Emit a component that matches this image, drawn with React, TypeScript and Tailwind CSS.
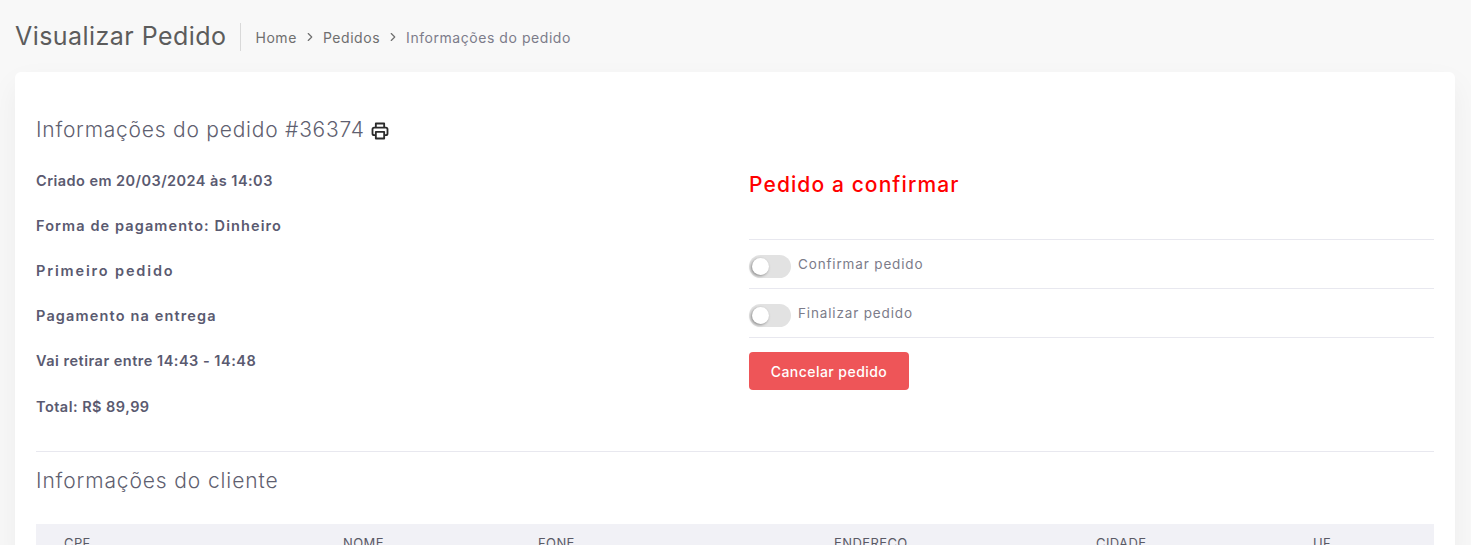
import React from 'react'
import { ChevronRight } from 'lucide-react'

// Tracking varies per row: Inter stands in for the wider original face
const infoRows = [
  { text: 'Criado em 20/03/2024 às 14:03', tracking: 'tracking-[0.45px]' },
  { text: 'Forma de pagamento: Dinheiro', tracking: 'tracking-[1.1px]' },
  { text: 'Primeiro pedido', tracking: 'tracking-[1.85px]' },
  { text: 'Pagamento na entrega', tracking: 'tracking-[1.15px]' },
  { text: 'Vai retirar entre 14:43 - 14:48', tracking: 'tracking-[0.5px]' },
  { text: 'Total: R$ 89,99', tracking: 'tracking-[0.47px]' },
]

const columns = [
  { label: 'CPF', width: 'w-[279px]' },
  { label: 'NOME', width: 'w-[195px]' },
  { label: 'FONE', width: 'w-[296px]' },
  { label: 'ENDEREÇO', width: 'w-[262px]' },
  { label: 'CIDADE', width: 'w-[217px]' },
  { label: 'UF', width: 'w-[121px]' },
]

const Toggle = ({ label }: { label: string }) => (
  <div className="flex h-[49px] items-center border-b border-[#e8e8ef]">
    <div className="relative mt-[4px] h-[23px] w-[42px] rounded-full bg-[#e2e2e2]">
      <div className="absolute left-[3px] top-[3px] h-[17px] w-[17px] rounded-full bg-white shadow-[-1px_1px_3px_rgba(0,0,0,0.4)]" />
    </div>
    <span className="ml-[7px] mt-[1px] text-[13.5px] tracking-[0.85px] text-[#7c7c8a]">{label}</span>
  </div>
)

const PrinterIcon = () => (
  <svg className="ml-[5px] mt-[2px] h-[20px] w-[20px] text-[#2b2b2b]" fill="none" stroke="currentColor" viewBox="0 0 24 24" strokeWidth={2.2} strokeLinejoin="round">
    <path d="M7 8V3h10v5" />
    <path d="M7 17H5a2 2 0 0 1-2-2v-5a2 2 0 0 1 2-2h14a2 2 0 0 1 2 2v5a2 2 0 0 1-2 2h-2" />
    <path d="M7 13h10v8H7z" />
  </svg>
)

const App = () => {
  return (
    <div className="h-screen overflow-hidden bg-[#f8f8f8] pl-[15px] pr-[16px] font-['Inter',sans-serif]">
      {/* Header */}
      <div className="flex h-[72px] items-center pt-[2px]">
        <h1 className="text-[25px] tracking-[0.45px] text-[#5c5c5c]">Visualizar Pedido</h1>
        <div className="ml-[14px] h-[28px] w-px bg-[#d9d9d9]" />
        <nav className="ml-[14px] flex items-center text-[14px] tracking-[0.55px] text-[#6f6f6f]">
          <span>Home</span>
          <ChevronRight className="mx-[6px] h-[14px] w-[14px]" />
          <span>Pedidos</span>
          <ChevronRight className="mx-[6px] h-[14px] w-[14px]" />
          <span className="text-[#7c7c8a]">Informações do pedido</span>
        </nav>
      </div>

      {/* Card */}
      <div className="rounded-md bg-white px-[21px] pt-[43px] shadow-[0_12px_30px_rgba(0,0,0,0.05)]">
        <div className="flex h-[30px] items-center">
          <h2 className="text-[21px] font-light tracking-[0.77px] text-[#5f5f70]">Informações do pedido #36374</h2>
          <PrinterIcon />
        </div>

        <div className="grid grid-cols-2 border-b border-[#e8e8ef] pb-[22px]">
          <div className="flex flex-col pt-[13px]">
            {infoRows.map((row) => (
              <p key={row.text} className={`flex h-[45.2px] items-center text-[14.5px] font-semibold text-[#5a5a70] ${row.tracking}`}>
                {row.text}
              </p>
            ))}
          </div>
          <div className="pl-[14px]">
            <div className="flex h-[95px] items-start border-b border-[#e8e8ef] pt-[24px]">
              <h3 className="text-[21px] font-medium tracking-[1.1px] text-[#ff0000]">Pedido a confirmar</h3>
            </div>
            <Toggle label="Confirmar pedido" />
            <Toggle label="Finalizar pedido" />
            <button className="mt-[14px] h-[38px] w-[160px] rounded bg-[#ee5558] text-[14px] font-medium tracking-[0.45px] text-white">
              Cancelar pedido
            </button>
          </div>
        </div>

        <h2 className="mt-[13px] h-[30px] text-[21px] font-light tracking-[0.88px] text-[#5f5f70]">Informações do cliente</h2>

        <div className="mt-[29px] flex h-[40px] bg-[#f1f1f6] pt-[10px] text-[13px] tracking-[0.4px] text-[#5a5a66]">
          {columns.map((col) => (
            <div key={col.label} className={`${col.width} pl-[28px]`}>
              {col.label}
            </div>
          ))}
        </div>
      </div>
    </div>
  )
}

export default App
